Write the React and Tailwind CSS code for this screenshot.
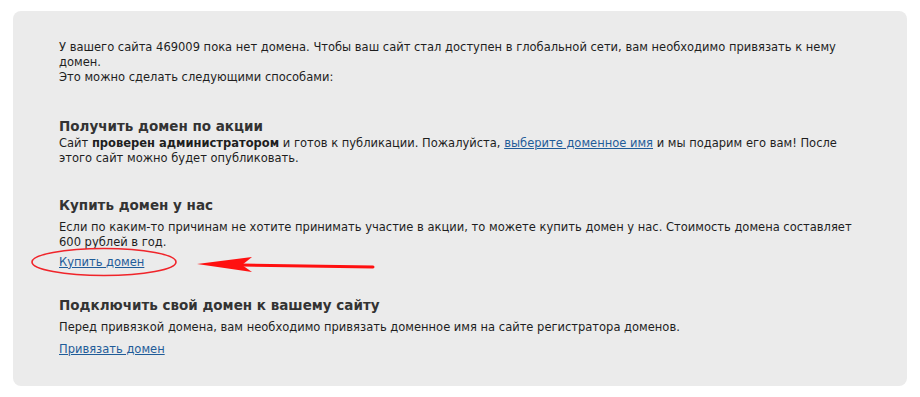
import React from 'react';

const linkCls = 'text-[#1f5c99] underline';
const headCls = 'text-[13.5px] leading-[18px] font-bold text-[#333]';

const App = () => {
  return (
    <div className="w-[920px] h-[397px] bg-white pt-[11px] pl-[13px]" style={{ fontFamily: '"DejaVu Sans", Verdana, sans-serif' }}>
      <div className="relative w-[894px] h-[375px] rounded-[8px] bg-[#ebebeb] pl-[46px] pr-[40px] pt-[28.5px] text-[11.5px] leading-[15px] text-[#1e1e1e]">
        <p>
          У вашего сайта 469009 пока нет домена. Чтобы ваш сайт стал доступен в глобальной сети, вам необходимо привязать к нему домен.
          <br />
          Это можно сделать следующими способами:
        </p>

        {/* Акция */}
        <h3 className={`${headCls} mt-[32.5px]`}>Получить домен по акции</h3>
        <p className="mt-[1px]">
          Сайт <b>проверен администратором</b> и готов к публикации. Пожалуйста,{' '}
          <a href="#" className={linkCls}>выберите доменное имя</a> и мы подарим его вам! После этого сайт можно будет опубликовать.
        </p>

        {/* Покупка */}
        <h3 className={`${headCls} mt-[30px]`}>Купить домен у нас</h3>
        <p className="mt-[5.5px]">
          Если по каким-то причинам не хотите принимать участие в акции, то можете купить домен у нас. Стоимость домена составляет 600 рублей в год.
        </p>
        <a href="#" className={`${linkCls} inline-block mt-[5px]`}>Купить домен</a>

        {/* Свой домен */}
        <h3 className={`${headCls} mt-[26.5px]`}>Подключить свой домен к вашему сайту</h3>
        <p className="mt-[5.5px]">Перед привязкой домена, вам необходимо привязать доменное имя на сайте регистратора доменов.</p>
        <a href="#" className={`${linkCls} inline-block mt-[7px]`}>Привязать домен</a>

        {/* red annotation over the link */}
        <svg className="absolute left-0 top-0 pointer-events-none" width="894" height="375" viewBox="0 0 894 375">
          <ellipse cx="91" cy="251" rx="72" ry="13.5" fill="none" stroke="#f0242a" strokeWidth="1.6" />
          <path d="M228 254 L360 256" stroke="#ff1010" strokeWidth="3" strokeLinecap="round" />
          <path d="M184 253 L239 246 L229 254 L239 261 Z" fill="#ff1010" />
        </svg>
      </div>
    </div>
  );
};

export default App;
